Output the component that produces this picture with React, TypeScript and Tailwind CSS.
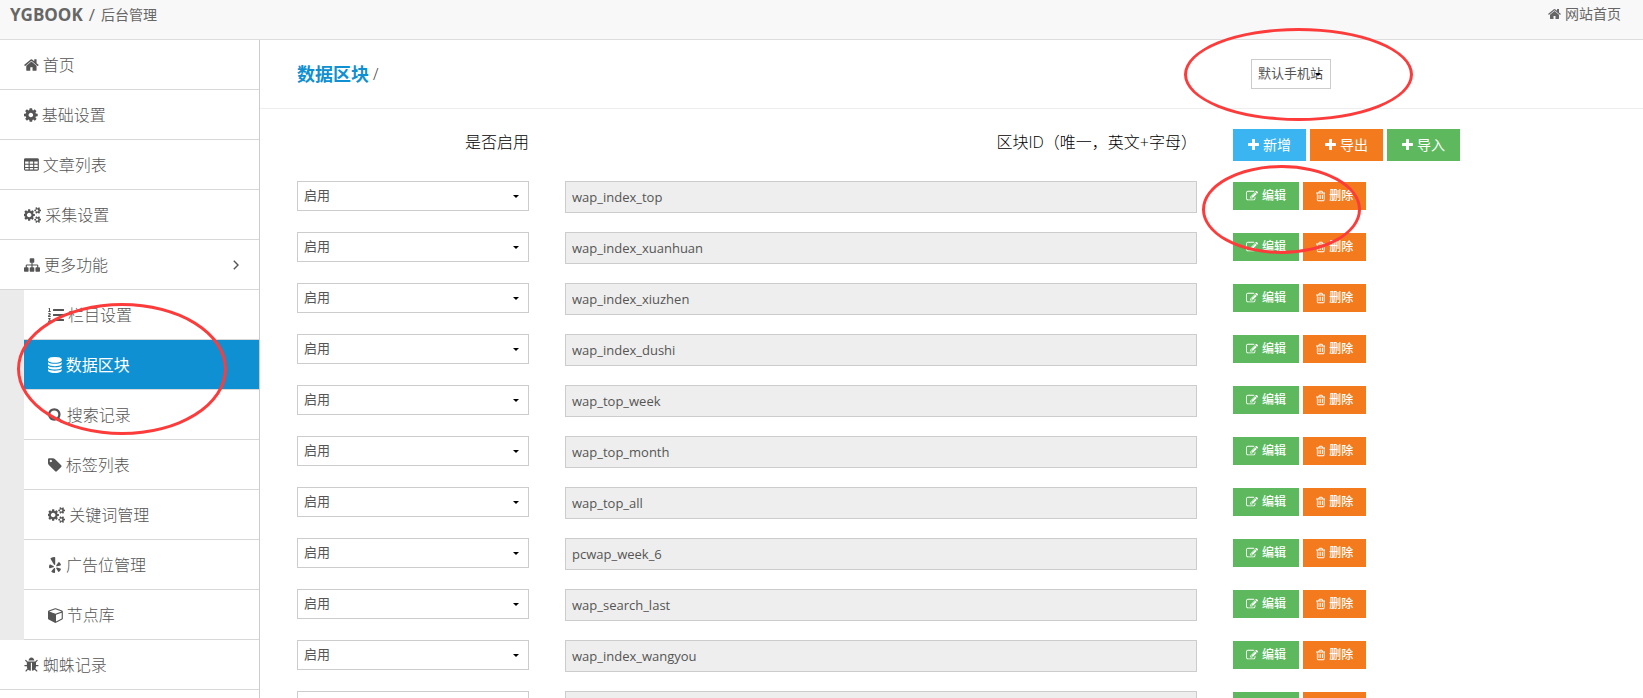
import type { ReactNode } from 'react';
import { FaListOl, FaYelp } from 'react-icons/fa';

const SMALL_GEAR =
  'v140q0 16-149 31-12 27-30 52 51 113 51 138 0 4-4 7-122 71-124 71-8 0-46-47t-52-68q-20 2-30 2t-30-2q-14 21-52 68t-46 47q-2 0-124-71-4-3-4-7 0-25 51-138-18-25-30-52-149-15-149-31v-140q0-16 149-31 13-29 30-52-51-113-51-138 0-4 4-7 4-2 35-20t59-34 30-16q8 0 46 46.5t52 67.5q20-2 30-2t30 2q51-71 92-112l6-2q4 0 124 70 4 3 4 7 0 25-51 138 17 23 30 52 149 15 149 31z';
const DISC = 'q237 0 443-43t325-127v170q0 69-103 128t-280 93.5-385 34.5-385-34.5-280-93.5-103-128v-170q119 84 325 127t443 43z';
const SLOT = 'v576q0 14-9 23t-23 9h-64q-14 0-23-9t-9-23v-576q0-14 9-23t23-9h64q14 0 23 9t9 23z';

const ICONS = {
  home: {
    box: '64 0 1664 1792',
    d: 'M1472 992v480q0 26-19 45t-45 19h-384v-384h-256v384h-384q-26 0-45-19t-19-45v-480q0-1 .5-3t.5-3l575-474 575 474q1 2 1 6zm223-69l-62 74q-8 9-21 11h-3q-13 0-21-7l-692-577-692 577q-12 8-24 7-13-2-21-11l-62-74q-8-10-7-23.5t11-21.5l719-599q32-26 76-26t76 26l244 204v-195q0-14 9-23t23-9h192q14 0 23 9t9 23v408l219 182q10 8 11 21.5t-7 23.5z',
  },
  cog: {
    box: '128 0 1536 1792',
    d: 'M1152 896q0-106-75-181t-181-75-181 75-75 181 75 181 181 75 181-75 75-181zm512-109v222q0 12-8 23t-20 13l-185 28q-19 54-39 91 35 50 107 138 10 12 10 25t-9 23q-27 37-99 108t-94 71q-12 0-26-9l-138-108q-44 23-91 38-16 136-29 186-7 28-36 28h-222q-14 0-24.5-8.5t-11.5-21.5l-28-184q-49-16-90-37l-141 107q-10 9-25 9-14 0-25-11-126-114-165-168-7-10-7-23 0-12 8-23 15-21 51-66.5t54-70.5q-27-50-41-99l-183-27q-13-2-21-12.5t-8-23.5v-222q0-12 8-23t19-13l186-28q14-46 39-92-40-57-107-138-10-12-10-24 0-10 9-23 26-36 98.5-107.5t94.5-71.5q13 0 26 10l138 107q44-23 91-38 16-136 29-186 7-28 36-28h222q14 0 24.5 8.5t11.5 21.5l28 184q49 16 90 37l142-107q9-9 24-9 13 0 25 10 129 119 165 170 7 8 7 22 0 12-8 23-15 21-51 66.5t-54 70.5q26 50 41 98l183 28q13 2 21 12.5t8 23.5z',
  },
  table: {
    box: '0 0 1664 1792',
    d: 'M160 128h1344q66 0 113 47t47 113v1088q0 66-47 113t-113 47h-1344q-66 0-113-47t-47-113v-1088q0-66 47-113t113-47zM128 512v256h384v-256zM640 512v256h384v-256zM1152 512v256h384v-256zM128 880v240h384v-240zM640 880v240h384v-240zM1152 880v240h384v-240zM128 1232v144q0 32 32 32h352v-176zM640 1232v176h384v-176zM1152 1232v176h352q32 0 32-32v-144z',
  },
  cogs: {
    box: '0 0 1920 1792',
    d: 'M832 896q0-106-75-181t-181-75-181 75-75 181 75 181 181 75 181-75 75-181zm768 512q0-52-38-90t-90-38-90 38-38 90q0 53 37.5 90.5t90.5 37.5 90.5-37.5 37.5-90.5zm0-1024q0-52-38-90t-90-38-90 38-38 90q0 53 37.5 90.5t90.5 37.5 90.5-37.5 37.5-90.5zm-384 421v185q0 10-7 19.5t-16 10.5l-155 24q-11 35-32 76 34 48 90 115 7 11 7 20 0 12-7 19-23 30-82.5 89.5t-78.5 59.5q-11 0-21-7l-115-90q-37 19-77 31-11 108-23 155-7 24-30 24h-186q-11 0-20-7.5t-10-17.5l-23-153q-34-10-75-31l-118 89q-7 7-20 7-11 0-21-8-144-133-144-160 0-9 7-19 10-14 41-53t47-61q-23-44-35-82l-152-24q-10-1-17-9.5t-7-19.5v-185q0-10 7-19.5t16-10.5l155-24q11-35 32-76-34-48-90-115-7-11-7-20 0-12 7-20 22-30 82-89t79-59q11 0 21 7l115 90q34-18 77-32 11-108 23-154 7-24 30-24h186q11 0 20 7.5t10 17.5l23 153q34 10 75 31l118-89q8-7 20-7 11 0 21 8 144 133 144 160 0 9-7 19-12 16-42 54t-45 60q23 48 34 82l152 23q10 2 17 10.5t7 19.5zM1920 1338' + SMALL_GEAR + 'M1920 314' + SMALL_GEAR,
  },
  sitemap: {
    box: '0 0 1792 1792',
    d: 'M1792 1248v320q0 40-28 68t-68 28h-320q-40 0-68-28t-28-68v-320q0-40 28-68t68-28h96v-192h-512v192h96q40 0 68 28t28 68v320q0 40-28 68t-68 28h-320q-40 0-68-28t-28-68v-320q0-40 28-68t68-28h96v-192h-512v192h96q40 0 68 28t28 68v320q0 40-28 68t-68 28h-320q-40 0-68-28t-28-68v-320q0-40 28-68t68-28h96v-192q0-52 38-90t90-38h512v-192h-96q-40 0-68-28t-28-68v-320q0-40 28-68t68-28h320q40 0 68 28t28 68v320q0 40-28 68t-68 28h-96v192h512q52 0 90 38t38 90v192h96q40 0 68 28t28 68z',
  },
  database: {
    box: '128 0 1536 1792',
    d: 'M896 768' + DISC + 'M896 1536' + DISC + 'M896 1152' + DISC + 'M896 0q208 0 385 34.5t280 93.5 103 128v128q0 69-103 128t-280 93.5-385 34.5-385-34.5-280-93.5-103-128v-128q0-69 103-128t280-93.5 385-34.5z',
  },
  search: {
    box: '64 0 1664 1792',
    d: 'M1216 832q0-185-131.5-316.5t-316.5-131.5-316.5 131.5-131.5 316.5 131.5 316.5 316.5 131.5 316.5-131.5 131.5-316.5zm512 832q0 52-38 90t-90 38q-54 0-90-38l-343-342q-179 124-399 124-143 0-273.5-55.5t-225-150-150-225-55.5-273.5 55.5-273.5 150-225 225-150 273.5-55.5 273.5 55.5 225 150 150 225 55.5 273.5q0 220-124 399l343 343q37 37 37 90z',
  },
  tag: {
    box: '128 0 1536 1792',
    d: 'M576 448q0-53-37.5-90.5t-90.5-37.5-90.5 37.5-37.5 90.5 37.5 90.5 90.5 37.5 90.5-37.5 37.5-90.5zm1067 576q0 53-37 90l-491 492q-39 37-91 37-53 0-90-37l-715-716q-38-37-64.5-101t-26.5-117v-416q0-52 38-90t90-38h416q53 0 117 26.5t102 64.5l715 714q37 39 37 91z',
  },
  cube: {
    box: '0 0 1664 1792',
    d: 'M896 1629l640-349v-636l-640 233v752zm-64-865l698-254-698-254-698 254zm832-252v768q0 35-18 65t-49 47l-704 384q-28 16-61 16t-61-16l-704-384q-31-17-49-47t-18-65v-768q0-40 23-73t61-47l704-256q22-8 44-8t44 8l704 256q38 14 61 47t23 73z',
  },
  bug: {
    box: '64 0 1664 1792',
    d: 'M1696 960q0 26-19 45t-45 19h-224q0 171-67 290l208 209q19 19 19 45t-19 45q-18 19-45 19t-45-19l-198-197q-5 5-15 13t-42 28.5-65 36.5-82 29-97 13v-896h-128v896q-51 0-101.5-13.5t-87-33-66-39-43.5-32.5l-15-14-183 207q-20 21-48 21-24 0-43-16-19-18-20.5-44.5t15.5-46.5l202-227q-58-114-58-274h-224q-26 0-45-19t-19-45 19-45 45-19h224v-294l-173-173q-19-19-19-45t19-45 45-19 45 19l173 173h844l173-173q19-19 45-19t45 19 19 45-19 45l-173 173v294h224q26 0 45 19t19 45zm-480-576h-640q0-133 93.5-226.5t226.5-93.5 226.5 93.5 93.5 226.5z',
  },
  plus: {
    box: '192 0 1408 1792',
    d: 'M1600 736v192q0 40-28 68t-68 28h-416v416q0 40-28 68t-68 28h-192q-40 0-68-28t-28-68v-416h-416q-40 0-68-28t-28-68v-192q0-40 28-68t68-28h416v-416q0-40 28-68t68-28h192q40 0 68 28t28 68v416h416q40 0 68 28t28 68z',
  },
  edit: {
    box: '0 0 1792 1792',
    d: 'M888 1184l116-116-152-152-116 116v56h96v96h56zm440-720q-16-16-33 1l-350 350q-17 17-1 33t33-1l350-350q17-17 1-33zm80 594v190q0 119-84.5 203.5t-203.5 84.5h-832q-119 0-203.5-84.5t-84.5-203.5v-832q0-119 84.5-203.5t203.5-84.5h832q63 0 117 25 15 7 18 23 3 17-9 29l-49 49q-14 14-32 8-23-6-45-6h-832q-66 0-113 47t-47 113v832q0 66 47 113t113 47h832q66 0 113-47t47-113v-126q0-13 9-22l64-64q15-15 35-7t20 29zm-96-738l288 288-672 672h-288v-288zm444 132l-92 92-288-288 92-92q28-28 68-28t68 28l152 152q28 28 28 68t-28 68z',
  },
  trash: {
    box: '192 0 1408 1792',
    d: 'M704 736' + SLOT + 'M960 736' + SLOT + 'M1216 736' + SLOT + 'M1344 1460v-948h-896v948q0 22 7 40.5t14.5 27 10.5 8.5h832q3 0 10.5-8.5t14.5-27 7-40.5zm-672-1076h448l-48-117q-7-9-17-11h-317q-10 2-17 11zm928 32v64q0 14-9 23t-23 9h-96v948q0 83-47 143.5t-113 60.5h-832q-66 0-113-58.5t-47-141.5v-952h-96q-14 0-23-9t-9-23v-64q0-14 9-23t23-9h309l70-167q15-37 54-63t79-26h320q40 0 79 26t54 63l70 167h309q14 0 23 9t9 23z',
  },
};

function Icon({ name, className = 'h-4' }: { name: keyof typeof ICONS; className?: string }) {
  return (
    <svg viewBox={ICONS[name].box} className={`w-auto shrink-0 ${className}`} fill="currentColor" fillRule="evenodd" aria-hidden="true">
      <path d={ICONS[name].d} />
    </svg>
  );
}

type Item = { label: string; icon: ReactNode; active?: boolean };

const TOP_ITEMS: Item[] = [
  { label: '首页', icon: <Icon name="home" /> },
  { label: '基础设置', icon: <Icon name="cog" /> },
  { label: '文章列表', icon: <Icon name="table" /> },
  { label: '采集设置', icon: <Icon name="cogs" /> },
];

const SUB_ITEMS: Item[] = [
  { label: '栏目设置', icon: <FaListOl className="size-4" /> },
  { label: '数据区块', icon: <Icon name="database" />, active: true },
  { label: '搜索记录', icon: <Icon name="search" /> },
  { label: '标签列表', icon: <Icon name="tag" /> },
  { label: '关键词管理', icon: <Icon name="cogs" /> },
  { label: '广告位管理', icon: <FaYelp className="h-4 w-3.5" /> },
  { label: '节点库', icon: <Icon name="cube" /> },
];

const BLOCKS = [
  'wap_index_top',
  'wap_index_xuanhuan',
  'wap_index_xiuzhen',
  'wap_index_dushi',
  'wap_top_week',
  'wap_top_month',
  'wap_top_all',
  'pcwap_week_6',
  'wap_search_last',
  'wap_index_wangyou',
  'wap_index_lishi',
];

function NavLink({ item, children }: { item: Item; children?: ReactNode }) {
  const tone = item.active ? 'bg-[#0e90d2] font-normal text-white' : 'bg-white font-light text-[#555]';
  return (
    <a href="#" className={`flex h-[50px] items-center gap-1 border-b border-[#d8d8d8] pr-5 pl-6 text-base ${tone}`}>
      {item.icon}
      <span>{item.label}</span>
      {children}
    </a>
  );
}

function Select({ label, value, className }: { label: string; value: string; className: string }) {
  return (
    <div className={`relative ${className}`}>
      <select aria-label={label} className="block h-[30px] w-full appearance-none rounded-none border border-[#ccc] bg-white pl-1.5 text-[13px] text-[#555]">
        <option>{value}</option>
      </select>
      <svg viewBox="0 0 6 3" className="pointer-events-none absolute top-3.5 right-2.5 h-[3px] w-1.5" aria-hidden="true">
        <path d="M0 0h6L3 3z" fill="#000" />
      </svg>
    </div>
  );
}

function Ring({ className }: { className: string }) {
  return <div className={`pointer-events-none absolute rounded-[50%] border-3 border-[#fd3b3b] ${className}`} />;
}

const GRID = 'grid grid-cols-[232fr_632fr_374fr] gap-9 pr-9 pl-[37px]';

export default function App() {
  return (
    <div className="relative flex h-screen flex-col overflow-hidden bg-white font-['Open_Sans','Noto_Sans_CJK_SC',sans-serif] text-[#333]">
      <header className="flex h-10 shrink-0 justify-between border-b border-[#ddd] bg-[#f8f8f8] pr-[22px] pl-2.5 text-sm text-[#666]">
        <div className="flex h-[30px] items-center gap-1.5">
          <strong className="text-[17px] font-bold">YGBOOK</strong>
          <span className="text-[17px]">/</span>
          <span>后台管理</span>
        </div>
        <a href="#" className="flex h-7 items-center gap-1">
          <Icon name="home" className="h-3.5" />
          网站首页
        </a>
      </header>

      <div className="flex min-h-0 flex-1">
        <nav className="w-[260px] shrink-0 border-r border-[#ccc]">
          {TOP_ITEMS.map((item) => (
            <NavLink key={item.label} item={item} />
          ))}
          <NavLink item={{ label: '更多功能', icon: <Icon name="sitemap" /> }}>
            <svg viewBox="0 0 6 10" className="ml-auto h-2.5 w-1.5" fill="none" stroke="currentColor" strokeWidth="1.4" aria-hidden="true">
              <path d="M.8 .8 5 5 .8 9.2" />
            </svg>
          </NavLink>
          <div className="bg-[#ebebeb] pl-6">
            {SUB_ITEMS.map((item) => (
              <NavLink key={item.label} item={item} />
            ))}
          </div>
          <NavLink item={{ label: '蜘蛛记录', icon: <Icon name="bug" /> }} />
        </nav>

        <main className="min-w-0 flex-1">
          <div className={`h-[69px] items-center border-b border-[#eee] ${GRID}`}>
            <h1 className="col-span-2 flex items-center gap-1">
              <strong className="text-lg font-bold text-[#0e90d2]">数据区块</strong>
              <span className="text-base font-light">/</span>
            </h1>
            <Select label="站点" value="默认手机站" className="ml-[18px] w-20" />
          </div>

          <table className="block pt-5">
            <thead className="block">
              <tr className={`h-[52px] ${GRID}`}>
                <th className="pt-px text-right text-base font-light text-black">是否启用</th>
                <th className="pt-px text-right text-base font-light text-black">区块ID（唯一，英文+字母）</th>
                <th className="flex gap-1 text-sm font-normal text-white">
                  <button className="flex h-8 w-[73px] items-center justify-center gap-1 bg-[#3bb4f2]">
                    <Icon name="plus" className="h-3.5" />
                    新增
                  </button>
                  <button className="flex h-8 w-[73px] items-center justify-center gap-1 bg-[#f37b1d]">
                    <Icon name="plus" className="h-3.5" />
                    导出
                  </button>
                  <button className="flex h-8 w-[73px] items-center justify-center gap-1 bg-[#5eb95e]">
                    <Icon name="plus" className="h-3.5" />
                    导入
                  </button>
                </th>
              </tr>
            </thead>
            <tbody className="block">
              {BLOCKS.map((id) => (
                <tr key={id} className={`h-[51px] ${GRID}`}>
                  <td>
                    <Select label={`${id} 是否启用`} value="启用" className="w-full" />
                  </td>
                  <td>
                    <input
                      aria-label="区块ID"
                      readOnly
                      value={id}
                      className="block h-8 w-full rounded-none border border-[#ccc] bg-[#eee] px-1.5 text-[13px] text-[#555]"
                    />
                  </td>
                  <td className="flex gap-1 pt-px text-xs font-medium text-white">
                    <button className="flex h-7 w-[66px] items-center justify-center gap-1 bg-[#5eb95e]">
                      <Icon name="edit" className="h-3" />
                      编辑
                    </button>
                    <button className="flex h-7 w-[63px] items-center justify-center gap-1 bg-[#f37b1d]">
                      <Icon name="trash" className="h-3" />
                      删除
                    </button>
                  </td>
                </tr>
              ))}
            </tbody>
          </table>
        </main>
      </div>

      <Ring className="top-[303px] left-[17px] h-[132px] w-[210px]" />
      <Ring className="top-[28px] left-[1184px] h-[93px] w-[229px]" />
      <Ring className="top-[165px] left-[1202px] h-[89px] w-[159px]" />
    </div>
  );
}
